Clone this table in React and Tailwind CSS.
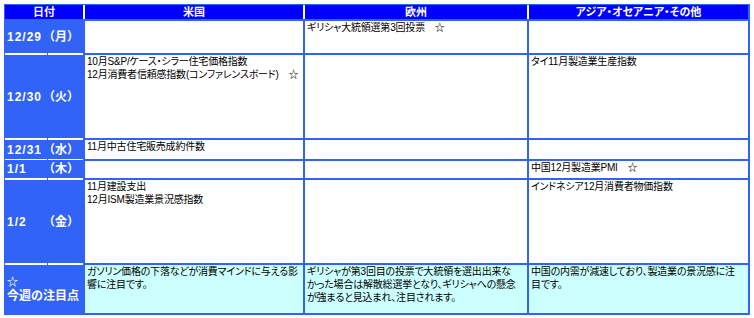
import React from 'react';

const FONT = "font-['Liberation_Sans','Noto_Sans_CJK_JP',sans-serif]";

const rows = [
  { date: '12/29', day: '（月）', us: [], eu: ['ギリシャ大統領選第3回投票\u3000☆'], asia: [] },
  {
    date: '12/30',
    day: '（火）',
    us: ['10月S&P/ケース・シラー住宅価格指数', '12月消費者信頼感指数(コンファレンスボード)\u3000☆'],
    eu: [],
    asia: ['タイ11月製造業生産指数'],
  },
  { date: '12/31', day: '（水）', us: ['11月中古住宅販売成約件数'], eu: [], asia: [] },
  { date: '1/1', day: '（木）', us: [], eu: [], asia: ['中国12月製造業PMI\u3000☆'] },
  {
    date: '1/2',
    day: '（金）',
    us: ['11月建設支出', '12月ISM製造業景況感指数'],
    eu: [],
    asia: ['インドネシア12月消費者物価指数'],
  },
];

const notes = {
  us: ['ガソリン価格の下落などが消費マインドに与える影', '響に注目です。'],
  eu: ['ギリシャが第3回目の投票で大統領を選出出来な', 'かった場合は解散総選挙となり、ギリシャへの懸念', 'が強まると見込まれ、注目されます。'],
  asia: ['中国の内需が減速しており、製造業の景況感に注', '目です。'],
};

function DateCell({ first, children }) {
  return (
    <div className={`flex flex-col bg-[#3163f7] ${first ? '' : '-mt-[2px]'}`}>
      {!first && (
        <div className="flex h-[2px] gap-[1px]">
          <div className="w-[42px] bg-white" />
          <div className="flex-1 bg-white" />
        </div>
      )}
      <div className="flex flex-1 items-center pl-[2px] text-[12px] font-bold text-white">{children}</div>
    </div>
  );
}

function Cell({ lines, note }) {
  return (
    <div className={`${note ? 'bg-[#ccffff]' : 'bg-white'} overflow-hidden pl-[2px] text-[10px] leading-[13px] tracking-[-0.2px] text-black [font-feature-settings:'palt']`}>
      {lines.map((l, i) => (
        <div key={i} className="whitespace-nowrap">{l}</div>
      ))}
    </div>
  );
}

export default function App() {
  return (
    <div className={`min-h-screen bg-white pl-[4px] pt-[4px] ${FONT}`}>
      <div className="w-[746px] bg-[#3163f7] pt-[1px] pl-[1px] pr-[2px] pb-[2px]">
        <div className="grid grid-cols-[78px_218px_222px_219px] grid-rows-[14px_32px_83px_19px_17px_83px_48px] gap-[2px]">
          <div className="flex items-center justify-center bg-[#0000ff] text-[11px] font-bold leading-none text-white">日付</div>
          <div className="-ml-[2px] flex items-center justify-center border-l-2 border-white bg-[#0000ff] text-[11px] font-bold leading-none text-white">米国</div>
          <div className="-ml-[2px] flex items-center justify-center border-l-2 border-white bg-[#0000ff] text-[11px] font-bold leading-none text-white">欧州</div>
          <div className="-ml-[2px] flex items-center justify-center border-l-2 border-white bg-[#0000ff] text-[11px] font-bold leading-none text-white [font-feature-settings:'palt']">アジア・オセアニア・その他</div>

          {rows.map((r, i) => (
            <React.Fragment key={r.date}>
              <DateCell first={i === 0}>
                <span className="w-[36px] tracking-[1px]">{r.date}</span>
                <span>{r.day}</span>
              </DateCell>
              <Cell lines={r.us} />
              <Cell lines={r.eu} />
              <Cell lines={r.asia} />
            </React.Fragment>
          ))}

          <DateCell>
            <div className="flex flex-col leading-[14px]">
              <span className="text-[11px]">☆</span>
              <span>今週の注目点</span>
            </div>
          </DateCell>
          <Cell lines={notes.us} note />
          <Cell lines={notes.eu} note />
          <Cell lines={notes.asia} note />
        </div>
      </div>
    </div>
  );
}
